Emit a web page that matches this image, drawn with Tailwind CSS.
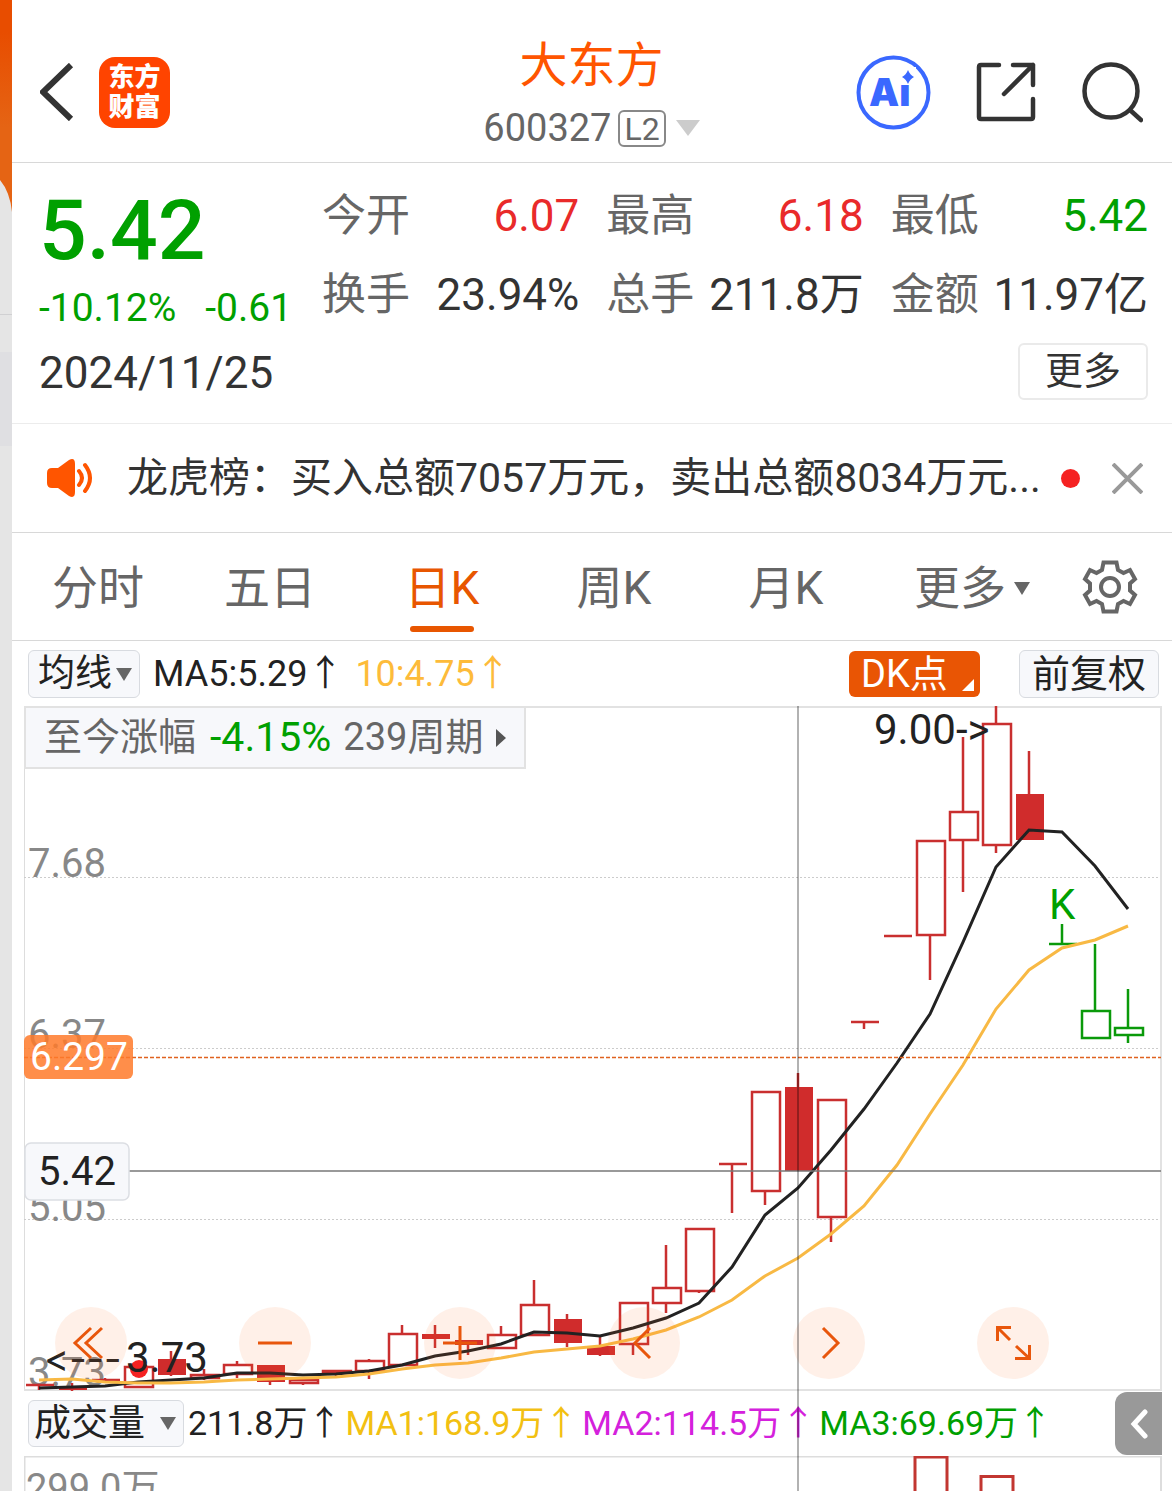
<!DOCTYPE html>
<html lang="zh-CN">
<head>
  <meta charset="UTF-8" />
  <meta name="viewport" content="width=device-width, initial-scale=1" />
  <title>大东方 600327</title>
  <script src="https://cdn.jsdelivr.net/npm/@tailwindcss/browser@4"></script>
</head>
<body class="bg-white font-['Roboto','Noto_Sans_CJK_SC',sans-serif] text-[#333]">

<div class="flex min-h-screen overflow-hidden">

  <!-- Edge of the page underneath -->
  <aside class="w-3 shrink-0 bg-[#e5e5e5]">
    <svg class="block w-3 h-[314px]" viewBox="0 0 12 314">
      <defs>
        <linearGradient id="edge" x1="0" y1="0" x2="0" y2="1">
          <stop offset="0.15" stop-color="#e84d00" />
          <stop offset="0.6" stop-color="#e56414" />
        </linearGradient>
      </defs>
      <path d="M0 0H12V212Q10 192 0 180Z" fill="url(#edge)" />
    </svg>
    <div class="h-[38px] border-t border-[#d0d0d2]"></div>
    <div class="h-[94px] bg-[#dfdfe2]"></div>
  </aside>

  <main class="flex-1 min-w-0">

    <!-- Header -->
    <header class="h-[163px] border-b border-[#d8d8d8] pt-[22px] pl-7 pr-[29px] grid grid-cols-[1fr_auto_1fr] items-center">
      <div class="flex items-center gap-6">
        <button aria-label="返回">
          <svg class="block w-[35px] h-[58px]" viewBox="0 0 35 58" fill="none" stroke="#333" stroke-width="6"><path d="M31 2L3 29L31 56" /></svg>
        </button>
        <a href="#" class="w-[71px] h-[71px] rounded-2xl bg-[#ff4400] text-white text-[26px] leading-[30px] font-black flex items-center justify-center text-center">东方<br />财富</a>
      </div>
      <div class="pt-3 text-center">
        <h1 class="text-[48px] leading-[60px] text-[#ff5500]">大东方</h1>
        <button class="flex items-center justify-center h-16 text-[38px] text-[#666]">
          600327
          <span class="ml-[7px] h-[37px] px-1 border-2 border-[#888] rounded-md text-[32px] leading-[34px]">L2</span>
          <svg class="ml-[10px] w-6 h-4" viewBox="0 0 24 16"><path d="M0 0H24L12 16Z" fill="#ccc" /></svg>
        </button>
      </div>
      <div class="flex items-center justify-end gap-[45px]">
        <button aria-label="AI">
          <svg class="block w-[75px] h-[75px]" viewBox="0 0 75 75">
            <circle cx="37.5" cy="37.5" r="35" fill="#fff" stroke="#3a68ff" stroke-width="4" />
            <text x="13" y="51" class="font-['Inter'] font-black text-[38px]" fill="#3a68ff">Ai</text>
            <path d="M43 12H60V29H43Z" fill="#fff" />
            <path d="M52 15Q54 20 58 22Q54 24 52 29Q50 24 46 22Q50 20 52 15Z" fill="#3a68ff" />
          </svg>
        </button>
        <button aria-label="分享">
          <svg class="block w-[60px] h-[60px]" viewBox="0 0 60 60" fill="none" stroke="#333" stroke-width="4.5" stroke-linecap="round" stroke-linejoin="round">
            <path d="M23 3H5Q3 3 3 5V55Q3 57 5 57H55Q57 57 57 55V37M37 3H57V23M57 3L28 32" />
          </svg>
        </button>
        <button aria-label="搜索">
          <svg class="block w-[62px] h-[62px]" viewBox="0 0 62 62" fill="none" stroke="#333" stroke-width="4.5" stroke-linecap="round">
            <circle cx="30" cy="30" r="26.5" /><path d="M49 49L60 59" />
          </svg>
        </button>
      </div>
    </header>

    <!-- Quote -->
    <section class="h-[261px] border-b border-[#ececec] pl-[27px] pr-6 text-[44px]">
      <div class="flex h-[172px]">
        <div class="w-[283px] shrink-0 text-[#00a000]">
          <div class="pt-[18px] text-[84px] leading-[100px] font-medium">5.42</div>
          <div class="flex gap-[29px] text-[39px] leading-[54px]"><span>-10.12%</span><span>-0.61</span></div>
        </div>
        <dl class="flex-1 grid grid-cols-3 gap-x-[27px] content-start pt-[14px] leading-[79px] whitespace-nowrap">
          <div class="flex justify-between"><dt class="text-[#666]">今开</dt><dd class="text-[#e92a2a]">6.07</dd></div>
          <div class="flex justify-between"><dt class="text-[#666]">最高</dt><dd class="text-[#e92a2a]">6.18</dd></div>
          <div class="flex justify-between"><dt class="text-[#666]">最低</dt><dd class="text-[#00a000]">5.42</dd></div>
          <div class="flex justify-between"><dt class="text-[#666]">换手</dt><dd>23.94%</dd></div>
          <div class="flex justify-between"><dt class="text-[#666]">总手</dt><dd>211.8万</dd></div>
          <div class="flex justify-between"><dt class="text-[#666]">金额</dt><dd>11.97亿</dd></div>
        </dl>
      </div>
      <div class="flex items-center justify-between h-[72px]">
        <time class="pt-1" datetime="2024-11-25">2024/11/25</time>
        <button class="w-[130px] h-[57px] border-2 border-[#eaeaea] rounded-md text-[38px] leading-[50px]">更多</button>
      </div>
    </section>

    <!-- News banner -->
    <section class="flex items-center h-[109px] border-b border-[#d8d8d8] pl-[35px] pr-[29px]">
      <svg class="w-[46px] h-[38px] shrink-0" viewBox="0 0 46 38" fill="#ff5500">
        <path d="M0 14Q0 9 5 9H11L22 1Q28 -2 28 5V33Q28 40 22 37L11 29H5Q0 29 0 24Z" />
        <path d="M32 12Q38 19 32 26M38 6Q48 19 38 32" fill="none" stroke="#ff5500" stroke-width="4" stroke-linecap="round" />
      </svg>
      <a href="#" class="ml-[34px] flex-1 min-w-0 truncate text-[41px] leading-[60px]">龙虎榜：买入总额7057万元，卖出总额8034万元...</a>
      <span class="ml-3 w-[19px] h-[19px] shrink-0 rounded-full bg-[#f52222]"></span>
      <button class="ml-8" aria-label="关闭">
        <svg class="block w-[31px] h-[31px]" viewBox="0 0 31 31" stroke="#999" stroke-width="4"><path d="M1 1L30 30M30 1L1 30" /></svg>
      </button>
    </section>

    <!-- Period tabs -->
    <nav class="grid grid-cols-[repeat(5,172fr)_200fr_100fr] h-[108px] border-b border-[#d8d8d8] text-[46px] text-[#666]">
      <button class="pt-1">分时</button>
      <button class="pt-1">五日</button>
      <button class="relative pt-1 text-[#e85600]">日K<span class="absolute bottom-2 left-1/2 -translate-x-1/2 w-16 h-[6px] rounded-full bg-[#e85600]"></span></button>
      <button class="pt-1">周K</button>
      <button class="pt-1">月K</button>
      <button class="flex items-center justify-center gap-2 pt-1">更多<svg class="w-4 h-[13px]" viewBox="0 0 16 13"><path d="M0 0H16L8 13Z" fill="#666" /></svg></button>
      <button class="flex items-center justify-center pr-6" aria-label="设置">
        <svg class="w-14 h-14" viewBox="-28 -28 56 56" fill="none" stroke="#666" stroke-width="4">
          <path d="M-6.500 -24.500H6.500L8 -17L13.500 -14L20 -17L25 -8L20 -3.500V3.500L25 8L20 17L13.500 14L8 17L6.500 24.500H-6.500L-8 17L-13.500 14L-20 17L-25 8L-20 3.500V-3.500L-25 -8L-20 -17L-13.500 -14L-8 -17Z" />
          <circle r="9" />
        </svg>
      </button>
    </nav>

    <!-- Moving averages -->
    <div class="flex items-center h-[65px] pl-4 pr-[13px] text-[36px] text-[#222] whitespace-nowrap">
      <label class="relative">
        <select aria-label="均线" class="block appearance-none w-[112px] h-12 pl-[9px] border border-[#d8dbe0] rounded-md bg-[#f7f8fb] text-[37px] leading-[46px]"><option>均线</option></select>
        <svg class="absolute right-2 top-[18px] w-4 h-[13px] pointer-events-none" viewBox="0 0 16 13"><path d="M0 0H16L8 13Z" fill="#666" /></svg>
      </label>
      <span class="ml-[13px]">MA5:5.29↑</span>
      <span class="ml-3 text-[#fdbb3a]">10:4.75↑</span>
      <button class="relative ml-auto w-[131px] h-[46px] pl-3 rounded-md bg-[#e95504] text-white text-left text-[38px] leading-[44px]">DK点
        <svg class="absolute right-[6px] bottom-[6px] w-3 h-3" viewBox="0 0 12 12"><path d="M12 0V12H0Z" fill="#fff" /></svg>
      </button>
      <button class="ml-[39px] w-[140px] h-12 border border-[#d8dbe0] rounded-md bg-[#f7f8fb] text-[38px] leading-[44px]">前复权</button>
    </div>

    <div class="relative pl-3 pr-[10px]">
      <!-- K line chart -->
      <div class="relative">
        <svg id="kline" class="block w-full h-auto" viewBox="24 706 1138 685">
          <path d="M24.500 706V1390" stroke="#ddd" />
          <path d="M24 707H1161V1390H24" fill="none" stroke="#e2e2e2" stroke-width="2" />
          <path d="M24 877.500H1160M24 1048.500H1160M24 1219.500H1160" stroke="#ccc" stroke-dasharray="2 2" />
          <g class="text-[40px]" fill="#888">
            <text x="28" y="877">7.68</text>
            <text x="28" y="1048">6.37</text>
            <text x="28" y="1221">5.05</text>
            <text x="28" y="1386">3.73</text>
          </g>
          <g id="candles" stroke-width="2.500"></g>
          <circle cx="139" cy="1369" r="9" fill="#f52222" />
          <polyline id="ma5" fill="none" stroke="#222" stroke-width="3" />
          <polyline id="ma10" fill="none" stroke="#f8b944" stroke-width="3" />
          <g class="text-[42px]" fill="#222">
            <text x="874" y="744">9.00-&gt;</text>
            <text x="44" y="1372" class="font-['Inter'] text-[38px] [font-feature-settings:'calt'_0]">&lt;---</text>
            <text x="126" y="1372">3.73</text>
            <text x="1049" y="919" fill="#00a000">K</text>
          </g>
          <path d="M24 1057.500H1161" stroke="#e0621f" stroke-width="1.500" stroke-dasharray="4 2" />
          <path d="M129 1171H1161" stroke="#777" stroke-width="1.500" />
          <rect x="24" y="1035" width="109" height="44" rx="6" fill="#ff7a2a" fill-opacity="0.85" />
          <text x="30" y="1070" class="text-[39px]" fill="#fff">6.297</text>
          <rect x="25" y="1143" width="104" height="57" rx="6" fill="#f7f8fb" stroke="#dcdee3" stroke-width="1.500" />
          <text x="38" y="1185" class="text-[40px]" fill="#222">5.42</text>
        </svg>
        <a href="#" class="absolute left-0 top-0 h-[63px] pl-[18px] pr-[18px] flex items-center border-2 border-[#e2e2e2] bg-[#f7f8fb] text-[38px] text-[#666] whitespace-nowrap">
          至今涨幅<span class="ml-[14px] text-[#00a000] text-[41px]">-4.15%</span><span class="ml-[12px]">239周期</span>
          <svg class="ml-[13px] w-[10px] h-[18px]" viewBox="0 0 10 18"><path d="M0 0L10 9L0 18Z" fill="#555" /></svg>
        </a>
        <!-- Chart controls -->
        <div class="absolute inset-x-0 bottom-3 flex justify-between pl-[31px] pr-[113px]">
          <button class="w-[72px] h-[72px] rounded-full bg-[#ff6a1a]/10" aria-label="最早">
            <svg class="block" viewBox="0 0 72 72" fill="none" stroke="#e8560c" stroke-width="3"><path d="M36 21L20 36L36 51M47 21L31 36L47 51" /></svg>
          </button>
          <button class="w-[72px] h-[72px] rounded-full bg-[#ff6a1a]/10" aria-label="缩小">
            <svg class="block" viewBox="0 0 72 72" stroke="#e8560c" stroke-width="3"><path d="M19 36H53" /></svg>
          </button>
          <button class="w-[72px] h-[72px] rounded-full bg-[#ff6a1a]/10" aria-label="放大">
            <svg class="block" viewBox="0 0 72 72" stroke="#e8560c" stroke-width="3"><path d="M19 36H53M36 19V53" /></svg>
          </button>
          <button class="w-[72px] h-[72px] rounded-full bg-[#ff6a1a]/10" aria-label="左移">
            <svg class="block" viewBox="0 0 72 72" fill="none" stroke="#e8560c" stroke-width="3"><path d="M42 21L27 36L42 51" /></svg>
          </button>
          <button class="w-[72px] h-[72px] rounded-full bg-[#ff6a1a]/10" aria-label="右移">
            <svg class="block" viewBox="0 0 72 72" fill="none" stroke="#e8560c" stroke-width="3"><path d="M30 21L45 36L30 51" /></svg>
          </button>
          <button class="w-[72px] h-[72px] rounded-full bg-[#ff6a1a]/10" aria-label="全屏">
            <svg class="block" viewBox="0 0 72 72" fill="none" stroke="#e8560c" stroke-width="3"><path d="M34 20.500H20.500V34M20 20L33 33M52.500 38V51.500H38M52 51L39 39" /></svg>
          </button>
        </div>
      </div>

      <!-- Volume -->
      <div class="flex items-center h-[65px] pl-1 text-[34px] text-[#222] whitespace-nowrap">
        <label class="relative">
          <select aria-label="副图指标" class="block appearance-none w-[156px] h-[47px] pl-[5px] border border-[#d8dbe0] rounded-md bg-[#f7f8fb] text-[37px] leading-[45px]"><option>成交量</option></select>
          <svg class="absolute right-2 top-[17px] w-4 h-[13px] pointer-events-none" viewBox="0 0 16 13"><path d="M0 0H16L8 13Z" fill="#666" /></svg>
        </label>
        <span class="ml-1">211.8万↑</span>
        <span class="ml-1 text-[#f2c012]">MA1:168.9万↑</span>
        <span class="ml-1 text-[#d421dc]">MA2:114.5万↑</span>
        <span class="ml-1 text-[#00a000]">MA3:69.69万↑</span>
        <button class="ml-auto w-[47px] h-[63px] rounded-l-xl bg-[#999] flex items-center justify-center" aria-label="展开">
          <svg class="w-[18px] h-8" viewBox="0 0 18 32" fill="none" stroke="#fff" stroke-width="5" stroke-linecap="round"><path d="M15 4L4 16L15 28" /></svg>
        </button>
      </div>
      <svg class="block w-full h-auto" viewBox="24 1456 1138 35">
        <path d="M24.500 1491V1456.500H1161V1491" fill="none" stroke="#ddd" stroke-width="2" />
        <text x="26" y="1501" class="text-[38px]" fill="#888">299.0万</text>
        <path d="M915 1495V1457H947V1495M981 1495V1476.500H1013V1495" fill="none" stroke="#c23631" stroke-width="3" />
      </svg>

      <!-- Crosshair -->
      <div class="absolute inset-y-0 left-[785px] w-[2px] bg-black/30 pointer-events-none"></div>
    </div>
  </main>
</div>

<script>
// [high, body top, body bottom, low, kind]  r: hollow up, f: filled, g: green
const candles = [
  [1385, 1385, 1385, 1390, 'r'], [1383, 1388, 1390, 1391, 'f'], [1378, 1380, 1380, 1380, 'r'],
  [1367, 1367, 1387, 1387, 'r'], [1351, 1359, 1375, 1376, 'f'], [1369, 1375, 1378, 1380, 'r'],
  [1361, 1365, 1374, 1378, 'r'], [1365, 1365, 1382, 1385, 'f'], [1380, 1380, 1383, 1385, 'r'],
  [1371, 1371, 1373, 1378, 'r'], [1359, 1361, 1371, 1379, 'r'], [1325, 1334, 1365, 1365, 'r'],
  [1325, 1334, 1339, 1348, 'f'], [1340, 1340, 1345, 1355, 'f'], [1326, 1335, 1348, 1348, 'r'],
  [1280, 1305, 1335, 1336, 'r'], [1314, 1319, 1343, 1347, 'f'], [1336, 1346, 1355, 1356, 'f'],
  [1303, 1303, 1344, 1355, 'r'], [1245, 1288, 1303, 1313, 'r'], [1229, 1229, 1291, 1293, 'r'],
  [1164, 1164, 1164, 1213, 'r'], [1092, 1092, 1191, 1205, 'r'], [1073, 1087, 1171, 1171, 'f'],
  [1100, 1100, 1217, 1242, 'r'], [1022, 1022, 1022, 1029, 'r'], [936, 936, 936, 936, 'r'],
  [841, 841, 935, 980, 'r'], [737, 812, 840, 892, 'r'], [706, 724, 845, 853, 'r'],
  [751, 794, 840, 840, 'f'], [924, 944, 944, 944, 'g'], [944, 1011, 1038, 1038, 'g'],
  [989, 1028, 1035, 1043, 'g']
];
const ma5 = [1388, 1387, 1386, 1382, 1380, 1378, 1373, 1373, 1375, 1374, 1371, 1365, 1356, 1351, 1344, 1332, 1333,
  1336, 1328, 1318, 1303, 1267, 1215, 1188, 1150, 1109, 1063, 1014, 942, 867, 830, 832, 866, 909];
const ma10 = [1380, 1379, 1382, 1383, 1383, 1382, 1380, 1379, 1378, 1377, 1374, 1369, 1365, 1363, 1358, 1352, 1349,
  1346, 1339, 1330, 1317, 1300, 1276, 1258, 1234, 1206, 1165, 1114, 1065, 1009, 970, 948, 940, 926];

const xAt = i => 39 + i * 33;

document.getElementById('candles').innerHTML = candles.map(([high, top, bottom, low, kind], i) => {
  const x = xAt(i);
  const color = kind === 'g' ? '#0a9a0a' : '#c92f2f';
  if (kind === 'f') {
    return `<path d="M${x} ${high}V${low}" stroke="${color}" /><rect x="${x - 13}" y="${top}" width="28" height="${bottom - top}" fill="#d02c2c" />`;
  }
  const body = top === bottom
    ? `<path d="M${x - 13} ${top}H${x + 15}" />`
    : `<rect x="${x - 13}" y="${top}" width="28" height="${bottom - top}" />`;
  return `<g fill="none" stroke="${color}"><path d="M${x} ${high}V${top}M${x} ${bottom}V${low}" />${body}</g>`;
}).join('');

const toPoints = values => values.map((y, i) => `${xAt(i)},${y}`).join(' ');
document.getElementById('ma5').setAttribute('points', toPoints(ma5));
document.getElementById('ma10').setAttribute('points', toPoints(ma10));
</script>

</body>
</html>
